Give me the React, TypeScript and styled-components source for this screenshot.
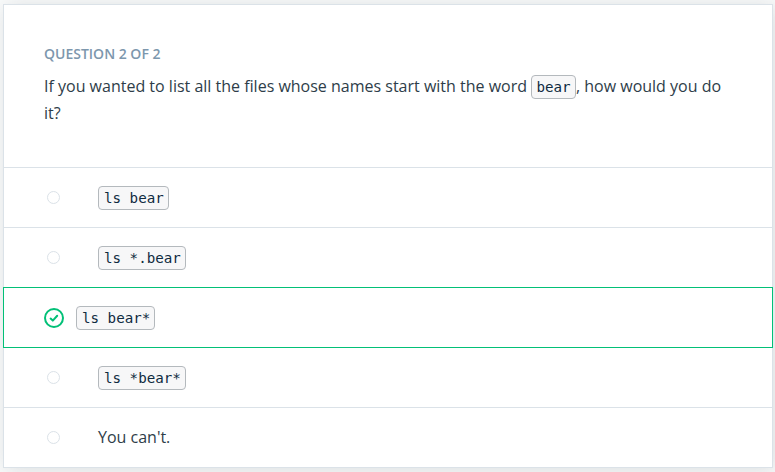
import React from "react";
import styled, { createGlobalStyle, css } from "styled-components";

const GlobalStyle = createGlobalStyle`
  *, *::before, *::after { box-sizing: border-box; }
  body {
    margin: 0;
    background: #fafbfb;
    font-family: "Open Sans", sans-serif;
    color: #2e3d49;
    overflow: hidden;
  }
`;

const Page = styled.main`
  height: 472px;
  padding: 4px 2px 4px 3px;
`;

const Card = styled.section`
  height: 464px;
  background: #fff;
  border: 1px solid #dbe2e8;
  box-shadow: 3px 2px 20px 0 rgba(46, 61, 73, 0.16);
`;

const Header = styled.header`
  height: 162px;
  padding: 39px 40px 0;
`;

const Eyebrow = styled.h2`
  margin: 0;
  font-size: 14px;
  font-weight: 600;
  line-height: 20px;
  color: #7d97ad;
  text-transform: uppercase;
`;

const Prompt = styled.p`
  margin: 9px 0 0;
  font-size: 16px;
  line-height: 27px;
`;

const Code = styled.code`
  display: inline-block;
  height: 24px;
  padding: 0 4.3px;
  border: 1px solid #b4b9bd;
  border-radius: 4px;
  background: #f7f7f8;
  color: #0f2b41;
  font-family: "DejaVu Sans Mono", monospace;
  font-size: 14.2px;
  line-height: 22px;
  white-space: pre;
`;

const AnswerCode = styled(Code)`
  padding: 0 4px 0 5px;
`;

const Options = styled.ul`
  list-style: none;
  margin: 0;
  padding: 0;
`;

const Option = styled.li<{ $selected: boolean }>`
  display: flex;
  align-items: center;
  height: 60px;
  padding: 0 40px;
  border-top: 1px solid #dbe2e8;
  font-size: 16px;
  line-height: 24px;

  ${({ $selected }) =>
    $selected &&
    css`
      height: 61px;
      margin: 0 -1px -1px;
      padding: 0 40px;
      border: 1px solid #02c077;
      position: relative;
    `}
`;

const Marker = styled.span<{ $selected: boolean }>`
  display: flex;
  flex: none;
  width: ${({ $selected }) => ($selected ? 32 : 51)}px;
  margin-right: ${({ $selected }) => ($selected ? 0 : 3)}px;
  padding-left: ${({ $selected }) => ($selected ? 0 : 3)}px;
`;

const Radio = styled.span`
  width: 13px;
  height: 13px;
  border: 1px solid #dbe2e8;
  border-radius: 50%;
`;

const Answer = styled.span`
  padding-bottom: 2px;
`;

const CheckIcon = () => (
  <svg width="20" height="20" viewBox="0 0 20 20" fill="none" stroke="#02c077">
    <circle cx="10" cy="10" r="9" strokeWidth="2" />
    <path d="M6.6 10.6 8.8 12.6 13.2 7.8" strokeWidth="2" strokeLinecap="round" strokeLinejoin="round" />
  </svg>
);

const options = [
  { text: "ls bear", code: true, selected: false },
  { text: "ls *.bear", code: true, selected: false },
  { text: "ls bear*", code: true, selected: true },
  { text: "ls *bear*", code: true, selected: false },
  { text: "You can't.", code: false, selected: false },
];

export default function App() {
  return (
    <>
      <GlobalStyle />
      <Page>
        <Card>
          <Header>
            <Eyebrow>Question 2 of 2</Eyebrow>
            <Prompt>
              If you wanted to list all the files whose names start with the word <Code>bear</Code>, how would you do it?
            </Prompt>
          </Header>
          <Options>
            {options.map(({ text, code, selected }) => (
              <Option key={text} $selected={selected}>
                <Marker $selected={selected}>{selected ? <CheckIcon /> : <Radio />}</Marker>
                {code ? <AnswerCode>{text}</AnswerCode> : <Answer>{text}</Answer>}
              </Option>
            ))}
          </Options>
        </Card>
      </Page>
    </>
  );
}
